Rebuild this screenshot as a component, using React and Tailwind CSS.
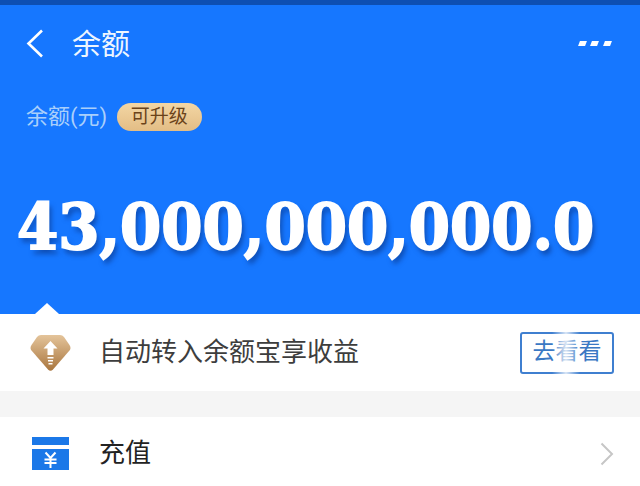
import React from "react";

const cjk = "font-['Roboto','Noto_Sans_CJK_SC',sans-serif]";

const Diamond = () => (
  <svg width="41" height="38" viewBox="0 0 41 38">
    <defs>
      <linearGradient id="gold" x1="0" y1="0" x2="0" y2="1">
        <stop offset="0" stopColor="#e4c49a" />
        <stop offset="1" stopColor="#a9763f" />
      </linearGradient>
    </defs>
    <path
      d="M11 1 H30 Q32.500 1 34 3 L39.500 11 Q41.500 14 39.500 16.500 L23 35.500 Q20.500 38 18 35.500 L1.500 16.500 Q-0.500 14 1.500 11 L7 3 Q8.500 1 11 1 Z"
      fill="url(#gold)"
    />
    <path d="M20.500 7 L27.500 14.500 H23.500 V21 H17.500 V14.500 H13.500 Z" fill="#fff" />
    <rect x="17.500" y="23" width="6" height="1.500" fill="#fff" />
    <rect x="18" y="26" width="5" height="1.500" fill="#fff" />
    <rect x="18.500" y="29" width="4" height="1.500" fill="#fff" />
  </svg>
);

const Recharge = () => (
  <svg width="37" height="33" viewBox="0 0 37 33">
    <rect x="0" y="0" width="37" height="8" fill="#1b78e8" />
    <rect x="0" y="12" width="37" height="21" fill="#1b78e8" />
    <path
      d="M13.500 15.500 L18.500 21 L23.500 15.500 M12.500 22.500 H24.500 M12.500 26 H24.500 M18.500 21 V31"
      fill="none"
      stroke="#fff"
      strokeWidth="2"
    />
  </svg>
);

const Back = () => (
  <svg width="18" height="29" viewBox="0 0 18 29" className="shrink-0">
    <path d="M16 1.500 L2.500 14.500 L16 27.500" fill="none" stroke="#fff" strokeWidth="2.600" />
  </svg>
);

const Next = () => (
  <svg width="14" height="24" viewBox="0 0 14 24" className="ml-auto">
    <path d="M1.500 1.500 L12 12 L1.500 22.500" fill="none" stroke="#c6c6c6" strokeWidth="2" />
  </svg>
);

export default function App() {
  return (
    <div className={`w-[640px] h-[486px] overflow-hidden bg-[#f5f5f5] ${cjk}`}>
      <div className="h-[5px] bg-[#0d4fb3]" />
      <div className="relative h-[309px] bg-[#1677ff]">
        <div className="flex items-center h-[76px] pl-[26px] pr-[30px]">
          <Back />
          <span className="ml-[28px] mt-[1px] pt-[4px] text-[29px] text-[#eef6ff]">余额</span>
          <div className="ml-auto flex gap-[6px]">
            <i className="block w-[6.500px] h-[5px] bg-white -skew-x-[20deg]" />
            <i className="block w-[6.500px] h-[5px] bg-white -skew-x-[20deg]" />
            <i className="block w-[6.500px] h-[5px] bg-white -skew-x-[20deg]" />
          </div>
        </div>
        <div className="flex items-center pl-[26px] mt-[22px] h-[28px]">
          <span className="-mt-[2px] text-[22px] text-[#a9cffb]">余额(元)</span>
          <span className="ml-[9.500px] flex items-center justify-center w-[85px] h-[28px] rounded-full bg-gradient-to-b from-[#f3d6a4] to-[#e3bd85] text-[19px] text-[#6b431a]">
            可升级
          </span>
        </div>
        <div className="mt-[50px] ml-[17px] origin-left scale-x-[0.915] scale-y-[0.89] font-['DejaVu_Serif',serif] font-bold [font-stretch:condensed] text-[72px] leading-[92px] text-white whitespace-nowrap [-webkit-text-stroke:2px_white] [text-shadow:3px_5px_6px_rgba(8,50,130,0.6)]">
          43,000,000,000.0
        </div>
        <div className="absolute left-[35px] bottom-0 w-0 h-0 border-l-[12px] border-r-[12px] border-b-[11px] border-l-transparent border-r-transparent border-b-white" />
      </div>
      <div className="flex items-center h-[77px] bg-white pl-[30px] pr-[26px]">
        <Diamond />
        <span className="ml-[28px] text-[26px] text-[#3d3d3d]">自动转入余额宝享收益</span>
        <button className="relative ml-auto w-[94px] h-[42px] rounded-[3px] border-2 border-[#3f7fd0] text-[23px] text-[#3a78c4]">
          去看看
          <span className="absolute -top-[3px] -bottom-[3px] left-[30px] w-[28px] bg-gradient-to-r from-white/0 via-white/80 to-white/0" />
        </button>
      </div>
      <div className="h-[26px]" />
      <div className="flex items-center h-[69px] bg-white pl-[32px] pr-[26px] pt-[4px]">
        <Recharge />
        <span className="ml-[30px] text-[26px] text-[#222222]">充值</span>
        <Next />
      </div>
    </div>
  );
}
